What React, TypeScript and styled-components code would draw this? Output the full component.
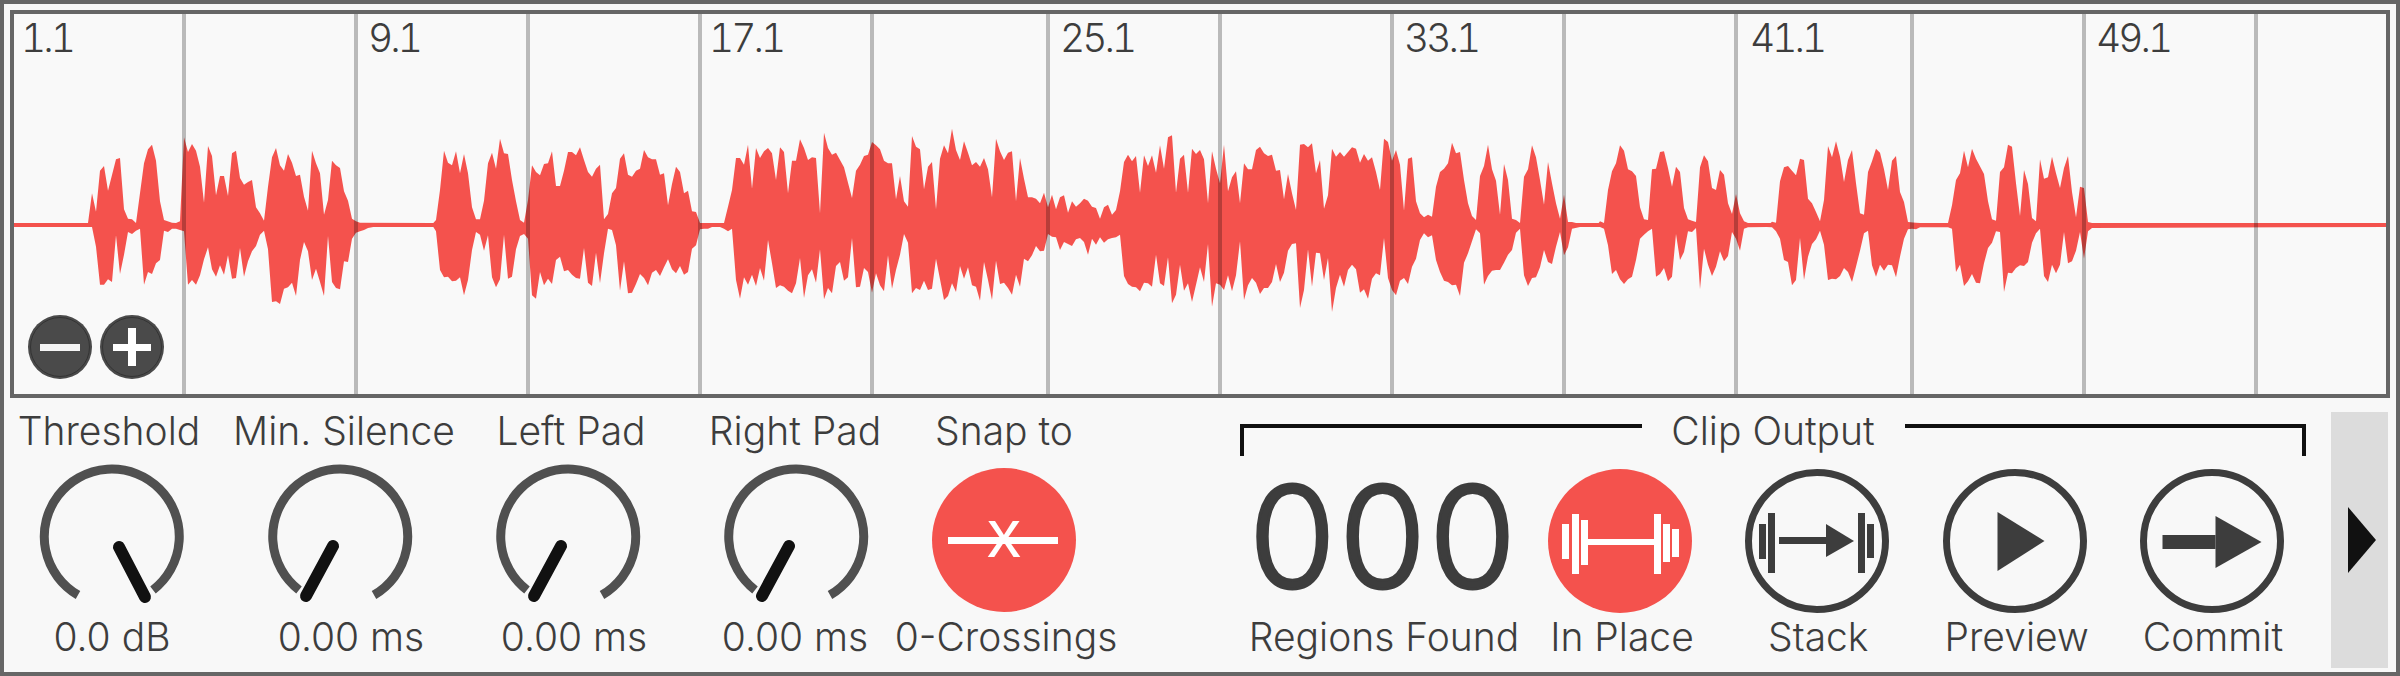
import React from "react";
import styled, { createGlobalStyle } from "styled-components";

const Global = createGlobalStyle`
  html, body { margin: 0; padding: 0; background: #f8f8f8; }
  body { width: 2400px; height: 676px; overflow: hidden; font-family: Inter, "Noto Sans", sans-serif; color: #3d3d3d; }
`;

const Windowed = styled.div`
  box-sizing: border-box;
  width: 2400px;
  height: 676px;
  border: 4px solid #666666;
  background: #f8f8f8;
  padding-top: 6px;
  display: flex;
  flex-direction: column;
`;

const WaveFrame = styled.div`
  box-sizing: border-box;
  position: relative;
  margin: 0 6px;
  width: 2380px;
  height: 388px;
  border: 4px solid #666666;
  background: #f9f9f9;
  flex: none;
`;

const WaveSvg = styled.svg`
  position: absolute;
  inset: 0;
  width: 100%;
  height: 100%;
  display: block;
`;

const Ruler = styled.div`
  position: absolute;
  inset: 0;
  display: flex;
`;

const RulerCell = styled.div<{ $w: number; $indent?: number }>`
  box-sizing: border-box;
  flex: none;
  width: ${(p) => p.$w}px;
  height: 100%;
  padding: 2px 0 0 ${(p) => 10 + (p.$indent ?? 0)}px;
  border-right: ${(p) => (p.$w === 128 ? "0" : "4px solid rgba(0, 0, 0, 0.25)")};
  font-size: 39px;
  line-height: 44px;
  font-weight: 300;
  font-variant-numeric: tabular-nums;
  letter-spacing: -3px;
  color: #3d3d3d;
  white-space: nowrap;
`;

const ZoomGroup = styled.div`
  position: absolute;
  left: 14px;
  bottom: 15px;
  display: flex;
  gap: 8px;
`;

const ZoomButton = styled.svg`
  width: 64px;
  height: 64px;
  display: block;
`;

const BottomBar = styled.div`
  display: flex;
  flex: 1;
  min-height: 0;
  padding-top: 11px;
  box-sizing: border-box;
  position: relative;
`;

const ParamGroup = styled.div`
  display: flex;
  gap: 48px;
  padding-left: 18px;
  flex: none;
`;

const Column = styled.div<{ $w?: number }>`
  width: ${(p) => p.$w ?? 180}px;
  display: flex;
  flex-direction: column;
  align-items: center;
  flex: none;
`;

const Caption = styled.div<{ $shift?: number }>`
  font-size: 39px;
  line-height: 44px;
  height: 44px;
  font-weight: 300;
  white-space: nowrap;
  color: #3d3d3d;
  transform: translateX(${(p) => p.$shift ?? 0}px);
`;

const Control = styled.div<{ $top: number }>`
  height: 162px;
  box-sizing: border-box;
  padding-top: ${(p) => p.$top}px;
  display: flex;
  justify-content: center;
  align-items: flex-start;
`;

const Icon = styled.svg`
  width: 144px;
  height: 144px;
  display: block;
  overflow: visible;
`;

const Output = styled.div`
  width: 1066px;
  margin-left: 166px;
  flex: none;
  display: flex;
  flex-direction: column;
`;

const Bracket = styled.div`
  display: flex;
  height: 44px;
`;

const BracketSide = styled.div<{ $side: "left" | "right" }>`
  flex: 1;
  box-sizing: border-box;
  margin-top: 15px;
  height: 32px;
  border-top: 4px solid #111111;
  border-${(p) => p.$side}: 4px solid #111111;
`;

const BracketTitle = styled.div`
  width: 263px;
  text-align: center;
  font-size: 39px;
  line-height: 44px;
  font-weight: 300;
  color: #3d3d3d;
`;

const OutputRow = styled.div`
  display: flex;
  padding-left: 16px;
  gap: 36px;
`;

const Counter = styled.div`
  font-size: 141px;
  line-height: 120px;
  font-weight: 300;
  letter-spacing: 3px;
  -webkit-text-stroke: 3px #3d3d3d;
  color: #3d3d3d;
  white-space: nowrap;
`;

const Buttons = styled.div`
  display: flex;
  gap: 53.3px;
`;

const SidePanel = styled.div`
  position: absolute;
  left: 2327px;
  top: 14px;
  width: 57px;
  height: 256px;
  background: #dcdcdc;
  display: flex;
  align-items: center;
  justify-content: center;
`;

const PanelArrow = styled.svg`
  width: 57px;
  height: 68px;
  display: block;
`;

type P = [number, number];
const S = (s: string): P[] =>
  s.split(";").map((t) => t.trim().split(",").map(Number) as P);

const crops: { off: number; top: P[]; bot: P[] }[] = [
  {
    off: 80,
    top: S("-198,310;0,310;24,310;36,220;48,275;60,152;72,138;84,212;108,118;120,114;132,268;144,296;156,298;168,310;192,130;204,88;216,74;228,122;240,244;252,300;276,308;288,309;300,304;312,52;324,96;336,72;348,92;360,140;372,248;384,78;396,108;408,226;420,168;432,168;444,228;456,100;468,92;480,174;492,194;504,186;516,180;528,262;540,280;552,302;564,200;576,112;588,84;600,136;612,152;624,102;636,128;648,168;660,164;672,230;684,272;696,92;708,130;720,160;732,284;744,240;756,122;768,136;780,144;792,214;804,242;816,296;828,304;840,308;1060,310;1068,300;1080,210;1092,92;1104,128;1116,136;1128,94;1140,160;1152,102;1164,160;1176,262;1188,298;1200,298;1212,242;1224,130;1236,98;1248,146;1260,56;1272,100;1284,102;1296,180;1308,244;1320,300;1332,308;1344,240;1356,136;1368,156;1380,166;1392,132;1404,130;1416,94;1428,198;1440,198;1452,152;1464,96;1476,96;1488,106;1500,82;1512,120;1524,156;1536,170;1548,146;1560,134"),
    bot: S("-198,320;36,320;48,380;60,494;72,494;84,478;96,486;108,346;120,462;132,404;144,336;156,342;168,332;180,326;192,494;204,456;216,462;228,430;240,420;252,332;264,336;276,326;288,326;312,334;324,494;336,480;348,494;360,466;372,418;384,382;396,448;408,470;420,436;432,464;444,406;456,476;468,474;480,384;492,470;504,424;516,394;528,378;540,344;552,332;564,388;576,546;588,544;600,552;612,506;624,502;636,488;648,528;660,420;672,366;684,394;696,480;708,446;720,486;732,528;744,348;756,486;768,504;780,508;792,424;804,426;816,356;828,338;840,334;852,330;864,324;880,320;1060,320;1068,334;1080,450;1092,472;1104,470;1116,484;1128,482;1140,472;1152,526;1164,480;1176,390;1188,336;1200,344;1212,392;1224,346;1236,472;1248,502;1260,478;1272,344;1284,476;1296,470;1308,388;1320,348;1332,342;1344,356;1356,526;1368,536;1380,456;1392,496;1404,476;1416,492;1428,420;1440,410;1452,454;1464,450;1476,464;1488,474;1500,476;1512,384;1524,488;1536,498;1548,398;1560,490"),
  },
  {
    off: 600,
    top: S("12,298;24,282;36,220;48,204;60,116;72,100;84,164;96,170;108,152;120,146;132,90;144,112;156,118;168,118;180,164;192,160;204,256;216,192;228,140;240,156;252,220;264,212;276,274;288,276;300,312;372,310;384,260;396,210;408,114;420,114;432,134;444,74;456,206;468,84;480,114;492,94;504,84;516,100;528,180;540,82;552,96;564,220;576,122;588,122;600,58;612,84;624,120;636,112;648,114;660,280;672,38;684,84;696,104;708,98;720,120;732,142;744,188;756,234;768,152;780,134;792,108;804,104;816,66;828,76;840,88;852,122;864,130;876,130;888,238;900,168;912,244;924,260;936,48;948,80;960,88;972,208;984,140;996,126;1008,268;1020,116;1032,76;1044,100;1056,26;1068,90;1080,120;1092,64;1104,98;1116,136;1128,126;1140,140;1152,114;1164,148;1176,232;1188,56;1200,94;1212,120;1224,98;1236,94;1248,244;1260,114;1272,176;1284,232;1296,232;1308,236;1320,250;1332,218;1344,262;1356,224;1368,268;1380,232;1392,226;1404,278;1416,244;1428,260;1440,250;1452,236;1464,242;1476,260;1488,264;1500,296;1512,262;1524,254;1536,284;1548,270;1560,214"),
    bot: S("12,400;24,326;36,330;48,376;60,512;72,424;84,520;96,518;108,492;120,462;132,474;144,496;156,458;168,450;180,468;192,442;204,418;216,448;228,460;240,438;252,464;264,456;276,386;288,376;300,328;312,326;324,326;336,321;360,321;372,326;384,334;396,326;408,480;420,536;432,472;444,494;456,464;468,498;480,444;492,482;504,360;516,430;528,504;540,496;552,500;564,512;576,520;588,490;600,414;612,534;624,466;636,448;648,488;660,388;672,538;684,504;696,520;708,438;720,426;732,482;744,472;756,354;768,502;780,500;792,444;804,456;816,518;828,460;840,496;852,514;864,406;876,506;888,450;900,404;912,342;924,368;936,520;948,504;960,510;972,482;984,510;996,506;1008,416;1020,478;1032,540;1044,528;1056,490;1068,516;1080,438;1092,476;1104,442;1116,496;1128,500;1140,542;1152,426;1164,480;1176,540;1188,422;1200,492;1212,488;1224,504;1236,524;1248,464;1260,500;1272,416;1284,424;1296,406;1308,378;1320,394;1332,392;1344,342;1356,350;1368,352;1380,390;1392,366;1404,372;1416,378;1428,358;1440,354;1452,366;1464,404;1476,356;1488,374;1500,352;1512,368;1524,358;1536,354;1548,352;1560,344"),
  },
  {
    off: 1120,
    top: S("12,126;24,104;36,124;48,108;60,218;72,106;84,138;96,106;108,158;120,76;132,146;144,52;156,46;168,218;180,116;192,104;204,218;216,86;228,102;240,90;252,118;264,250;276,94;288,146;300,190;312,74;324,214;336,172;348,154;360,250;372,130;384,148;396,148;408,90;420,80;432,100;444,108;456,104;468,152;480,150;492,238;504,162;516,220;528,270;540,74;552,72;564,82;576,70;588,160;600,120;612,266;624,226;636,86;648,110;660,96;672,110;684,96;696,82;708,86;720,128;732,102;744,122;756,112;768,156;780,210;792,56;804,66;816,122;828,90;840,134;852,272;864,116;876,112;888,244;900,280;912,292;924,284;936,290;948,200;960,156;972,146;984,130;996,68;1008,100;1020,96;1032,180;1044,250;1056,288;1068,300;1080,168;1092,138;1104,74;1116,148;1128,182;1140,284;1152,132;1164,180;1176,296;1188,300;1200,310;1212,170;1224,148;1236,76;1248,112;1260,180;1272,254;1284,126;1296,190;1308,250;1320,296;1332,224;1344,306;1356,306;1368,310;1436,310"),
    bot: S("12,468;24,492;36,500;48,502;60,514;72,488;84,490;96,500;108,404;120,490;132,498;144,412;156,550;168,524;180,434;192,512;204,490;216,546;228,494;240,442;252,486;264,372;276,560;288,490;300,494;312,510;324,466;336,514;348,466;360,364;372,540;384,496;396,474;408,488;420,522;432,504;444,504;456,486;468,432;480,486;492,458;504,392;516,372;528,370;540,564;552,510;564,388;576,500;588,398;600,400;612,480;624,414;636,576;648,504;660,464;672,500;684,450;696,434;708,448;720,518;732,508;744,536;756,476;768,460;780,466;792,354;804,474;816,510;828,526;840,482;852,474;864,492;876,440;888,416;900,360;912,340;924,352;936,346;948,420;960,456;972,482;984,486;996,496;1008,494;1020,528;1032,428;1044,400;1056,364;1068,328;1080,340;1092,494;1104,468;1116,452;1128,450;1140,450;1152,428;1164,404;1176,390;1188,338;1200,326;1212,466;1224,498;1236,474;1248,472;1260,442;1272,390;1284,426;1296,432;1308,380;1320,336;1332,406;1344,382;1356,326;1380,320;1436,320"),
  },
  {
    off: 1600,
    top: S("0,304;12,310;24,210;36,154;48,130;60,76;72,92;84,148;96,154;108,168;120,262;132,298;144,300;156,148;168,146;180,96;192,94;204,144;216,200;228,140;240,156;252,264;264,298;276,302;288,306;300,142;312,106;324,124;336,204;348,210;360,150;372,164;384,250;396,282;408,222;420,280;432,304;444,310;512,310;516,305;528,308;540,184;552,142;564,138;576,152;588,166;600,116;612,120;624,236;636,250;648,276;660,304;672,240;684,78;696,112;708,64;720,110;732,186;744,120;756,90;768,190;780,280;792,284;804,156;816,124;828,86;840,98;852,148;864,210;876,122;888,108;900,216;912,246;924,306;948,308;960,310;1044,310;1056,256;1068,180;1080,160;1092,92;1104,142;1116,86;1128,116;1152,162;1164,244;1176,298;1188,302;1200,156;1212,142;1224,74;1236,80;1248,190;1260,288;1272,150;1284,192;1296,294;1308,304;1320,118;1332,176;1344,172;1356,110;1368,160;1380,204;1392,144;1404,108;1416,216;1428,292;1440,200;1452,204;1464,306;1476,310;2358,310"),
    bot: S("0,320;12,326;24,376;36,462;48,450;60,478;72,492;84,478;96,470;108,420;120,356;132,344;144,334;156,326;168,470;180,462;192,444;204,484;216,470;228,342;240,420;252,396;264,334;276,336;288,324;300,508;312,386;324,434;336,468;348,440;360,394;372,424;384,408;396,336;408,356;420,392;432,326;444,322;500,320;516,322;528,334;540,356;552,420;564,426;576,496;588,480;600,354;612,480;624,410;636,372;648,358;660,332;672,374;684,480;696,476;708,478;720,468;732,444;744,456;756,486;768,440;780,392;792,340;804,332;816,436;828,470;840,434;852,452;864,434;876,436;888,472;900,410;912,356;924,328;936,326;948,328;960,322;1044,322;1056,326;1068,456;1080,434;1092,498;1104,484;1116,462;1128,488;1140,490;1152,430;1164,384;1176,368;1188,334;1200,336;1212,516;1224,458;1236,460;1248,444;1260,436;1272,438;1284,426;1296,368;1308,340;1320,326;1332,468;1344,486;1356,434;1368,460;1380,434;1392,336;1404,430;1416,424;1428,392;1440,336;1452,416;1464,334;1476,324;2358,320"),
  },
];

const fmt = (n: number) => Math.round(n * 100) / 100;
const pts = (key: "top" | "bot") =>
  crops.flatMap((c) =>
    c[key].map(([x, y]) => {
      const edge = key === "top" ? Math.min(y, 309) : Math.max(y, 321);
      return `${fmt(c.off + x / 3)},${fmt(120 + edge / 3)}`;
    })
  );
const wavePoints = [...pts("top"), ...pts("bot").reverse()].join(" ");

const cells: { w: number; label?: string; indent?: number }[] = [
  { w: 172, label: "1.1", indent: -3 }, { w: 172 },
  { w: 172, label: "9.1" }, { w: 172 },
  { w: 172, label: "17.1", indent: -3 }, { w: 176 },
  { w: 172, label: "25.1" }, { w: 172 },
  { w: 172, label: "33.1" }, { w: 172 },
  { w: 176, label: "41.1", indent: 2 }, { w: 172 },
  { w: 172, label: "49.1" }, { w: 128 },
];

const Knob = () => (
  <Icon viewBox="0 0 144 144">
    <path d="M 31 127 A 67.5 67.5 0 1 1 106 132" fill="none" stroke="#505050" strokeWidth={9} />
    <line x1={65} y1={83} x2={38} y2={133} stroke="#111111" strokeWidth={12} strokeLinecap="round" />
  </Icon>
);

const KnobMirrored = () => (
  <Icon viewBox="0 0 144 144">
    <path d="M 38 132 A 67.5 67.5 0 1 1 113 127" fill="none" stroke="#505050" strokeWidth={9} />
    <line x1={79} y1={84} x2={105} y2={134} stroke="#111111" strokeWidth={12} strokeLinecap="round" />
  </Icon>
);

const RED = "#f4524d";
const INK = "#3d3d3d";

const App = () => (
  <>
    <Global />
    <Windowed>
      <WaveFrame>
        <WaveSvg viewBox="14 14 2372 380" preserveAspectRatio="none">
          <polygon points={wavePoints} fill={RED} />
        </WaveSvg>
        <Ruler>
          {cells.map((c, i) => (
            <RulerCell key={i} $w={c.w} $indent={c.indent}>{c.label}</RulerCell>
          ))}
        </Ruler>
        <ZoomGroup>
          <ZoomButton viewBox="0 0 64 64">
            <circle cx={32} cy={32} r={32} fill="#4a4a4a" />
            <circle cx={32} cy={32} r={29.5} fill="none" stroke="#333333" strokeWidth={1} />
            <rect x={12} y={29} width={40} height={7} fill="#f5f5f5" />
          </ZoomButton>
          <ZoomButton viewBox="0 0 64 64">
            <circle cx={32} cy={32} r={32} fill="#4a4a4a" />
            <circle cx={32} cy={32} r={29.5} fill="none" stroke="#333333" strokeWidth={1} />
            <rect x={13} y={29} width={38} height={7} fill="#ffffff" />
            <rect x={28} y={13} width={8} height={38} fill="#ffffff" />
          </ZoomButton>
        </ZoomGroup>
      </WaveFrame>
      <BottomBar>
        <ParamGroup>
          <Column>
            <Caption $shift={-3}>Threshold</Caption>
            <Control $top={10}><KnobMirrored /></Control>
            <Caption>0.0 dB</Caption>
          </Column>
          <Column>
            <Caption $shift={4}>Min. Silence</Caption>
            <Control $top={10}><Knob /></Control>
            <Caption $shift={11}>0.00 ms</Caption>
          </Column>
          <Column>
            <Caption $shift={3}>Left Pad</Caption>
            <Control $top={10}><Knob /></Control>
            <Caption $shift={6}>0.00 ms</Caption>
          </Column>
          <Column>
            <Caption $shift={-1}>Right Pad</Caption>
            <Control $top={10}><Knob /></Control>
            <Caption $shift={-1}>0.00 ms</Caption>
          </Column>
          <Column $w={140}>
            <Caption>Snap to</Caption>
            <Control $top={15}>
              <Icon viewBox="0 0 144 144">
                <circle cx={72} cy={72} r={72} fill={RED} />
                <rect x={16} y={69} width={110} height={7} fill="#ffffff" />
                <text x={72} y={89} textAnchor="middle" fontFamily="'Liberation Sans', sans-serif" fontSize={68} fill="#ffffff">x</text>
              </Icon>
            </Control>
            <Caption $shift={2}>0-Crossings</Caption>
          </Column>
        </ParamGroup>
        <Output>
          <Bracket>
            <BracketSide $side="left" />
            <BracketTitle>Clip Output</BracketTitle>
            <BracketSide $side="right" />
          </Bracket>
          <OutputRow>
            <Column $w={256}>
              <Control $top={24}><Counter>000</Counter></Control>
              <Caption>Regions Found</Caption>
            </Column>
            <Buttons>
              <Column $w={144}>
                <Control $top={16}>
                  <Icon viewBox="0 0 144 144">
                    <circle cx={72} cy={72} r={72} fill={RED} />
                    <g fill="#ffffff">
                      <rect x={14} y={55} width={7} height={35} />
                      <rect x={24} y={45} width={7} height={60} />
                      <rect x={33} y={51} width={7} height={45} />
                      <rect x={40} y={70} width={66} height={6} />
                      <rect x={106} y={45} width={7} height={60} />
                      <rect x={115} y={55} width={7} height={38} />
                      <rect x={124} y={60} width={7} height={28} />
                    </g>
                  </Icon>
                </Control>
                <Caption $shift={2}>In Place</Caption>
              </Column>
              <Column $w={144}>
                <Control $top={16}>
                  <Icon viewBox="0 0 144 144">
                    <circle cx={72} cy={72} r={68.5} fill="none" stroke={INK} strokeWidth={7} />
                    <g fill={INK}>
                      <rect x={14} y={55} width={7} height={35} />
                      <rect x={23} y={44} width={7} height={60} />
                      <rect x={34} y={68} width={47} height={7} />
                      <polygon points="81,55 109,72 81,88" />
                      <rect x={113} y={44} width={7} height={60} />
                      <rect x={122} y={55} width={7} height={34} />
                    </g>
                  </Icon>
                </Control>
                <Caption $shift={1}>Stack</Caption>
              </Column>
              <Column $w={144}>
                <Control $top={16}>
                  <Icon viewBox="0 0 144 144">
                    <circle cx={72} cy={72} r={68.5} fill="none" stroke={INK} strokeWidth={7} />
                    <polygon points="54.5,43 101.5,72 54.5,102" fill={INK} />
                  </Icon>
                </Control>
                <Caption $shift={2}>Preview</Caption>
              </Column>
              <Column $w={144}>
                <Control $top={16}>
                  <Icon viewBox="0 0 144 144">
                    <circle cx={72} cy={72} r={68.5} fill="none" stroke={INK} strokeWidth={7} />
                    <g fill={INK}>
                      <rect x={22.5} y={66} width={53} height={14} />
                      <polygon points="75.5,47 121.5,73 75.5,99" />
                    </g>
                  </Icon>
                </Control>
                <Caption $shift={1}>Commit</Caption>
              </Column>
            </Buttons>
          </OutputRow>
        </Output>
        <SidePanel>
          <PanelArrow viewBox="0 0 57 68">
            <polygon points="17,1 45,34 17,67" fill="#111111" />
          </PanelArrow>
        </SidePanel>
      </BottomBar>
    </Windowed>
  </>
);

export default App;
